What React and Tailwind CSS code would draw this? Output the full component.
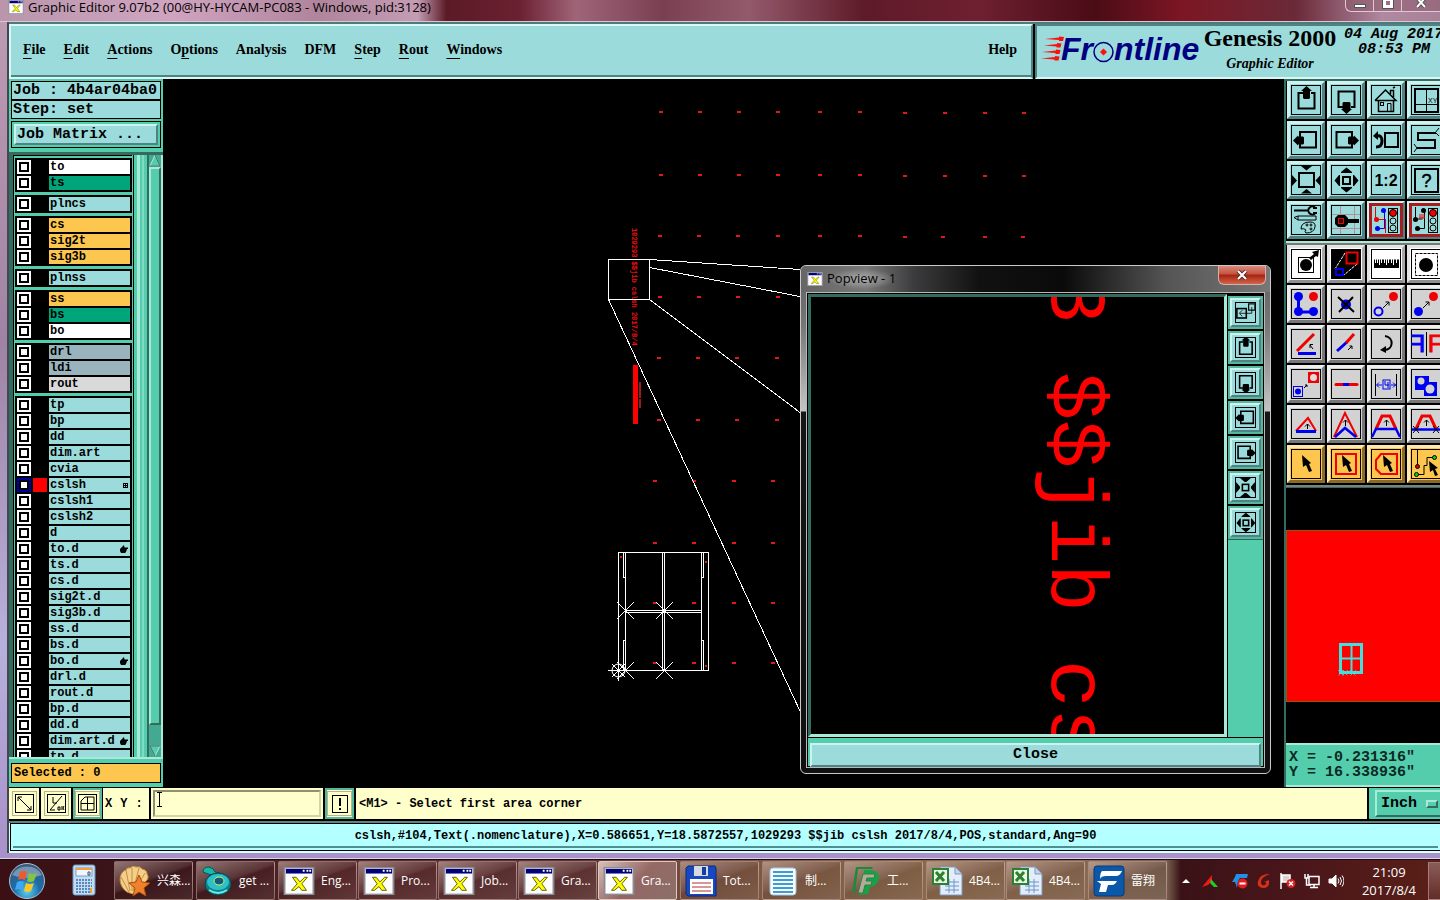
import React from "react";

const MONO = "font-['Liberation_Mono',monospace]";
const SERIF = "font-['Liberation_Serif',serif]";
const UI = "font-['Open_Sans','Noto_Sans_CJK_SC',sans-serif]";

const RAISED = "border-2 border-t-[#cdf3f1] border-l-[#cdf3f1] border-b-[#4f8383] border-r-[#4f8383]";

/* ---------- window glyphs ---------- */

function AppIcon({ className }) {
  return (
    <svg viewBox="0 0 32 30" className={className} aria-hidden="true">
      <rect x="0.5" y="0.5" width="31" height="29" fill="#fff" stroke="#8c8c94" strokeWidth="2" />
      <rect x="2" y="2" width="28" height="5" fill="#00007b" />
      <path d="M20 4h2M24 4h2M27 4h2" stroke="#fff" strokeWidth="2" />
      <path d="M9 11h4l4 5 5-5h3l-6 7 5 7h-5l-3-4-5 4H8l6-7z" fill="#ffff00" stroke="#5a5a00" strokeWidth="1" />
    </svg>
  );
}

/* ---------- tool glyphs, drawn in a 30 x 30 box ---------- */

const ink = { stroke: "#000", fill: "none", strokeWidth: 2 };
const RED = "#f00000";
const BLUE = "#0000f0";

const glyphs = {
  panUp: (
    <g>
      <path d="M12 8H7.5v15.500h16V8H20" {...ink} />
      <path d="M15.500 1l5.500 5h-2v7l-1 1h-5l-1-1V6h-2z" />
    </g>
  ),
  panDown: (
    <g>
      <path d="M12 22H7.500V6.500h16V22H20" {...ink} />
      <path d="M15.500 29l5.500-5h-1.500v-6l-1-1h-6l-1 1v6H10z" />
    </g>
  ),
  panLeft: (
    <g>
      <path d="M9 12V7h16v15.500H9V19" {...ink} />
      <path d="M2 15.500l5-5v1h5l1 1v6l-1 1H7v1z" />
    </g>
  ),
  panRight: (
    <g>
      <path d="M21 12V7H5.500v15.500H21V19" {...ink} />
      <path d="M28 15.500l-5-5v1h-5l-1 1v6l1 1h5v1z" />
    </g>
  ),
  home: (
    <g fill="none" stroke="#000" strokeWidth="1">
      <path d="M4 15.500L14.500 5 25 15.500H4M7.500 15.500v11h15v-11M19.500 9V5.500h3V12M22 3l2-1" strokeWidth="1.500" />
      <rect x="9.500" y="17.500" width="3" height="3" />
      <path d="M16.500 26V18.500h3.500V26" />
    </g>
  ),
  xyWindow: (
    <g>
      <rect x="4" y="4" width="23" height="23" {...ink} />
      <path d="M15.500 4v23M4 19.500h23" stroke="#000" fill="none" />
      <text x="17" y="18" fontSize="7" fontFamily="Liberation Sans">XY</text>
    </g>
  ),
  previous: (
    <g>
      <rect x="14" y="8" width="13" height="14" {...ink} />
      <path d="M6 11q5-1 5 5t-6 6" fill="none" stroke="#000" strokeWidth="3" />
      <path d="M2 11l5-5v9z" />
    </g>
  ),
  serpentine: (
    <g fill="none" stroke="#000">
      <path d="M25 8H7v7h17v8H6" strokeWidth="2" />
      <path d="M24 8l4-5M25 8l3 3M6 23l-3 4M6 23l-3-4" />
    </g>
  ),
  zoomIn: (
    <g>
      <rect x="8" y="8" width="15" height="14" {...ink} />
      <path d="M10 1h11l-5.500 4.500zM10 28.500h11L15.500 24zM1 10v11l5-5.500zM29.500 10v11l-5-5.500z" />
    </g>
  ),
  zoomInSmall: (
    <g>
      <rect x="11" y="11" width="8" height="8" {...ink} />
      <path d="M8 3h14l-6 5h-2zM8 27h14l-6-5h-2zM3 8v14l5-6v-2zM27 8v14l-5-6v-2z" />
    </g>
  ),
  zoomOut: (
    <g>
      <rect x="12" y="12" width="7" height="7" {...ink} />
      <path d="M10 7l5.500-4.500L21 7v1H10zM10 23l5.500 4.500L21 23v-1H10zM8 10l-4.500 5.500L8 21h1V10zM23 10l4.500 5.500L23 21h-1V10z" />
    </g>
  ),
  oneToTwo: (
    <text x="15" y="21" textAnchor="middle" fontSize="16" fontWeight="bold" fontFamily="Liberation Sans">1:2</text>
  ),
  help: (
    <g>
      <rect x="4" y="4" width="23" height="23" {...ink} />
      <text x="15.500" y="22" textAnchor="middle" fontSize="18" fontFamily="Liberation Sans" stroke="#000" strokeWidth="0.5">?</text>
    </g>
  ),
  tools: (
    <g fill="none" stroke="#000">
      <path d="M3 5.500h15M22 3h4M22 8h4" strokeWidth="2" />
      <path d="M24 2.500a4 4 0 1 0 0 6" strokeWidth="2" />
      <path d="M3 12.500l4-1.500h18v4H7zM7 11v4" />
      <path d="M10 24q0-7 9-7 6 0 5 5-1 6-9 6-2-1 0-3-2-2-5-1z" />
      <circle cx="16" cy="20" r="1" /><circle cx="20" cy="20" r="1" /><circle cx="20" cy="24" r="1" />
    </g>
  ),
  pad: (
    <g>
      <path d="M9.500 1v28M23.500 1v28M1 9.500h28M1 23.500h28" stroke="#b48e92" fill="none" />
      <path d="M16 14h12v4H16z" />
      <path d="M7 10h7l3 3v6l-3 3H7l-3-3v-6z" />
      <rect x="7.500" y="13.500" width="5" height="5" fill="none" stroke="#f00000" />
      <rect x="9.500" y="15.500" width="1" height="1" fill="#f00000" />
    </g>
  ),
  signalOn: (
    <g fill="none">
      <path d="M4.500 2v12M5.500 14.500h9M14.500 14v14" stroke={RED} />
      <path d="M13.500 5v18.500H8" stroke={BLUE} />
      <circle cx="5.500" cy="14.500" r="2.500" fill={RED} /><circle cx="12.500" cy="5.500" r="2.500" fill={BLUE} /><circle cx="6.500" cy="23.500" r="2.500" fill={BLUE} />
      <rect x="17.500" y="3.500" width="9" height="24" stroke="#000" />
      <circle cx="22" cy="8" r="3.500" fill={RED} stroke="#000" />
      <circle cx="22" cy="16" r="3" stroke="#000" /><circle cx="22" cy="23" r="3" stroke="#000" />
    </g>
  ),
  signalOff: (
    <g fill="none">
      <path d="M4.500 2v12h7M13.500 5v18.500H7" stroke="#000" />
      <path d="M9 9v4M11 9v4M13 9v4M8 13h6" stroke={RED} />
      <circle cx="4.500" cy="14.500" r="2.500" fill="#000" /><circle cx="12.500" cy="5.500" r="2.500" fill="#000" /><circle cx="6.500" cy="23.500" r="2.500" fill="#000" />
      <rect x="17.500" y="3.500" width="9" height="24" stroke="#000" />
      <circle cx="22" cy="8" r="3.500" fill={RED} stroke="#000" />
      <circle cx="22" cy="16" r="3" stroke="#000" /><circle cx="22" cy="23" r="3" stroke="#000" />
    </g>
  ),
  addFeature: (
    <g>
      <rect x="7.500" y="8.500" width="15" height="15" fill="none" stroke="#000" />
      <circle cx="15" cy="16" r="6" />
      <path d="M18 9l5-4-2-2 7-2-1 7-2-1-5 4z" />
    </g>
  ),
  copyOut: (
    <g fill="none">
      <rect x="1" y="1" width="28" height="28" fill="#000" />
      <path d="M14 4L4 20M26 15L13 26" stroke="#fff" strokeDasharray="3 1" />
      <rect x="15.500" y="3.500" width="11" height="11" stroke={RED} strokeWidth="2" />
      <rect x="5" y="20" width="7" height="6" stroke={BLUE} strokeWidth="2" />
    </g>
  ),
  ruler: (
    <g>
      <path d="M3 10.500h25V19H3z" />
      <path d="M4.500 10v4M6.500 10v4M8.500 10v6M10.500 10v4M13.500 10v4M15.500 10v6M17.500 10v4M20.500 10v4M22.500 10v6M25.500 10v4" stroke="#fff" />
    </g>
  ),
  areaSelect: (
    <g>
      <rect x="4.500" y="4.500" width="22" height="22" fill="none" stroke="#000" strokeDasharray="3 1" />
      <circle cx="15" cy="16" r="7" />
    </g>
  ),
  netPoints: (
    <g>
      <path d="M7.500 8v15h15" stroke={BLUE} strokeWidth="3" fill="none" />
      <circle cx="7.500" cy="7.500" r="4.500" fill={BLUE} /><circle cx="7.500" cy="22.500" r="4.500" fill={BLUE} /><circle cx="22.500" cy="22.500" r="4.500" fill={BLUE} />
      <circle cx="22.500" cy="7.500" r="4.500" fill={RED} />
    </g>
  ),
  deleteFeature: (
    <g>
      <circle cx="15" cy="15.500" r="5" fill={BLUE} />
      <path d="M7 8l16 15M22 8L8 23" stroke="#000" strokeWidth="2" />
    </g>
  ),
  moveRing: (
    <g>
      <circle cx="7.500" cy="22.500" r="4" fill="none" stroke={BLUE} strokeWidth="2" />
      <circle cx="22.500" cy="7.500" r="4.500" fill={RED} />
      <path d="M12 19l6-6M14.500 13H18v3.500" stroke="#000" fill="none" />
    </g>
  ),
  copyDot: (
    <g>
      <circle cx="7.500" cy="22.500" r="4.500" fill={BLUE} />
      <circle cx="22.500" cy="7.500" r="4.500" fill={RED} />
      <path d="M12 19l6-6M14.500 13H18v3.500" stroke="#000" fill="none" />
    </g>
  ),
  rotateLine: (
    <g fill="none">
      <path d="M6 22L23 5" stroke={RED} strokeWidth="3" />
      <path d="M7 24.500h18" stroke={BLUE} strokeWidth="3" />
      <path d="M22 20l-3-4M19 19v-3.500h3" stroke="#000" />
    </g>
  ),
  stretchLine: (
    <g fill="none">
      <path d="M6 22l10-9" stroke={BLUE} strokeWidth="3" />
      <path d="M15 14l8-9" stroke={RED} strokeWidth="3" />
      <path d="M17 21l4-4M18.500 17H21v3" stroke="#000" />
    </g>
  ),
  rotate: (
    <g>
      <path d="M14 7c9 1 9 14-1 14" fill="none" stroke="#000" strokeWidth="2" />
      <path d="M9 21l6-4v7z" />
    </g>
  ),
  mirror: (
    <g fontFamily="Liberation Sans" fontSize="23" strokeWidth="1">
      <text x="-14" y="23" transform="scale(-1,1)" fill={BLUE} stroke={BLUE}>F</text>
      <text x="17" y="23" fill={RED} stroke={RED}>F</text>
      <path d="M15.500 3v24" stroke="#000" />
    </g>
  ),
  swapShape: (
    <g fill="none">
      <rect x="2.500" y="17.500" width="9" height="10" stroke={BLUE} /><circle cx="7" cy="22.500" r="3" fill={BLUE} />
      <rect x="17" y="3" width="11" height="11" fill={RED} /><circle cx="22.500" cy="8.500" r="3.500" fill="#ddd" />
      <path d="M13 19l3-3M14 16h2v2" stroke="#000" />
    </g>
  ),
  mergeLine: (
    <g>
      <path d="M5 15.500h21" stroke={RED} strokeWidth="3" strokeLinecap="round" />
      <path d="M12 15.500h6" stroke={BLUE} strokeWidth="3" />
    </g>
  ),
  spacing: (
    <g fill="none">
      <path d="M4.500 5v22M25.500 5v22" stroke="#000" />
      <rect x="12" y="11" width="7" height="9" stroke={BLUE} />
      <path d="M14 12v4h4M17 13v6M6 16h5M20 16h5M8 13.500L5.500 16 8 18.500M22 13.500l2.500 2.500-2.500 2.500" stroke={BLUE} />
    </g>
  ),
  surfaces: (
    <g>
      <path d="M4 7h14v6h8v14H13v-6H4z" fill={BLUE} />
      <circle cx="10" cy="12" r="3.500" fill="#d2d2d2" /><circle cx="19" cy="20" r="4.500" fill="#d2d2d2" />
    </g>
  ),
  tri1: (
    <g fill="none">
      <path d="M5 22L17 9l8 13" stroke={RED} strokeWidth="2" />
      <path d="M5 22.500h20" stroke={BLUE} strokeWidth="3" />
      <path d="M16.500 20v-5M14 17.500l2.500-2.500 2.500 2.500" stroke="#000" />
    </g>
  ),
  tri2: (
    <g fill="none">
      <path d="M3 28L14 4l12 24" stroke={RED} strokeWidth="2" />
      <path d="M4 28l10-9 11 9" stroke={BLUE} strokeWidth="2.500" />
      <path d="M14.500 17v-6M12 13.500l2.500-2.500 2.500 2.500" stroke="#000" />
    </g>
  ),
  trap1: (
    <g fill="none">
      <path d="M5 20l6-13h8l6 13" stroke={RED} strokeWidth="3" />
      <path d="M1 28l4-8h20l4 8" stroke={BLUE} strokeWidth="2.500" />
      <path d="M15.500 17v-6M13 13.500l2.500-2.500 2.500 2.500" stroke="#000" />
    </g>
  ),
  trap2: (
    <g fill="none">
      <path d="M5 20l6-13h8l6 13" stroke={RED} strokeWidth="3" />
      <path d="M1 20.500h28" stroke={BLUE} strokeWidth="2.500" />
      <path d="M15.500 17v-6M13 13.500l2.500-2.500 2.500 2.500M2 17l6 7M8 17l-6 7M22 17l6 7M28 17l-6 7" stroke="#000" />
    </g>
  ),
  cursor: <path d="M11 6l1 12 3-2 3 7 3-1-3-7 2-1z" />,
  cursorBox: (
    <g>
      <rect x="5" y="5" width="20" height="20" fill="none" stroke={RED} strokeWidth="2" />
      <path d="M11 6l1 12 3-2 3 7 3-1-3-7 2-1z" />
    </g>
  ),
  cursorPoly: (
    <g>
      <path d="M10 5h16v20H10l-5-5v-9z" fill="none" stroke={RED} strokeWidth="2" />
      <path d="M12 6l1 12 3-2 3 7 3-1-3-7 2-1z" />
    </g>
  ),
  cursorNet: (
    <g>
      <path d="M6.500 1v16M6 25.500h7v-9h3V8.500h7" fill="none" stroke="#000" />
      <circle cx="6.500" cy="17.500" r="2" fill="#d00" stroke="#000" /><circle cx="5.500" cy="25.500" r="2" fill="#0d0" stroke="#000" /><circle cx="23.500" cy="8.500" r="2" fill="#0d0" stroke="#000" />
      <path d="M18 12l1 11 3-2 2 6 3-1-3-6 3-1z" />
    </g>
  ),
  popLink: (
    <g fill="none" stroke="#000">
      <rect x="4" y="10" width="12" height="12" strokeWidth="2" />
      <rect x="19" y="4" width="8" height="8" strokeWidth="1.500" />
      <path d="M8 16h15v-8M11 12l-4 4 4 4" />
    </g>
  ),
};

const zoomTools = [
  ["panUp", "Pan up"], ["panDown", "Pan down"], ["home", "Home"], ["xyWindow", "XY window"],
  ["panLeft", "Pan left"], ["panRight", "Pan right"], ["previous", "Previous view"], ["serpentine", "Serpentine"],
  ["zoomIn", "Zoom in"], ["zoomOut", "Zoom out"], ["oneToTwo", "Scale one to two"], ["help", "Query"],
  ["tools", "Setup"], ["pad", "Pad"], ["signalOn", "Layer signals", "alert"], ["signalOff", "Net signals", "alert"],
];

const editTools = [
  ["addFeature", "Add feature", "white"], ["copyOut", "Popview", "white"], ["ruler", "Measure", "white"], ["areaSelect", "Area select", "white"],
  ["netPoints", "Net points", "gray"], ["deleteFeature", "Delete", "gray"], ["moveRing", "Move", "gray"], ["copyDot", "Copy", "gray"],
  ["rotateLine", "Rotate line", "gray"], ["stretchLine", "Stretch line", "gray"], ["rotate", "Rotate", "gray"], ["mirror", "Mirror", "gray"],
  ["swapShape", "Swap shape", "gray"], ["mergeLine", "Merge line", "gray"], ["spacing", "Spacing", "gray"], ["surfaces", "Surfaces", "gray"],
  ["tri1", "Stretch corner", "gray"], ["tri2", "Stretch parallel corner", "gray"], ["trap1", "Move segment", "gray"], ["trap2", "Trim segment", "gray"],
  ["cursor", "Select", "gold"], ["cursorBox", "Select in box", "gold"], ["cursorPoly", "Select in polygon", "gold"], ["cursorNet", "Select net", "gold"],
];

const toneClasses = {
  cyan: "bg-[#9bdbdb] border-t-[#cdf3f1] border-l-[#cdf3f1] border-b-[#4f8383] border-r-[#4f8383]",
  alert: "bg-[#9bdbdb] border-t-[#cdf3f1] border-l-[#cdf3f1] border-b-[#4f8383] border-r-[#4f8383]",
  white: "bg-white border-t-[#e4e4e4] border-l-[#e4e4e4] border-b-[#8f8f8f] border-r-[#a8a8a8]",
  gray: "bg-[#d2d2d2] border-t-[#efefef] border-l-[#efefef] border-b-[#777777] border-r-[#777777]",
  gold: "bg-[#fdc64e] border-t-[#ffe9b0] border-l-[#ffe9b0] border-b-[#8a6b24] border-r-[#8a6b24]",
};

function ToolButton({ icon, label, tone = "cyan" }) {
  const alert = tone === "alert";
  return (
    <button aria-label={label} className={`flex size-[38px] items-center justify-center border-3 ${toneClasses[tone]}`}>
      <svg viewBox="0 0 30 30" className="size-[30px] shrink-0 overflow-visible">
        {alert ? (
          <rect x="-0.5" y="-0.5" width="31" height="31" fill="none" stroke="#a81c20" strokeWidth="3" />
        ) : (
          <rect x="0.5" y="0.5" width="29" height="29" fill="none" stroke="#000" />
        )}
        {glyphs[icon]}
      </svg>
    </button>
  );
}

/* ---------- layer list ---------- */

const fills = {
  white: "bg-white",
  green: "bg-[#00a57c]",
  cyan: "bg-[#9bdbdb]",
  gold: "bg-[#fdc64e]",
  slate: "bg-[#9ab4bd]",
  light: "bg-[#d9d9d9]",
};

const layerGroups = [
  [["to", "white"], ["ts", "green"]],
  [["plncs", "cyan"]],
  [["cs", "gold"], ["sig2t", "gold"], ["sig3b", "gold"]],
  [["plnss", "cyan"]],
  [["ss", "gold"], ["bs", "green"], ["bo", "white"]],
  [["drl", "slate"], ["ldi", "slate"], ["rout", "light"]],
  [
    ["tp"], ["bp"], ["dd"], ["dim.art"], ["cvia"], ["cslsh", "cyan", "grid"], ["cslsh1"], ["cslsh2"], ["d"],
    ["to.d", "cyan", "hand"], ["ts.d"], ["cs.d"], ["sig2t.d"], ["sig3b.d"], ["ss.d"], ["bs.d"],
    ["bo.d", "cyan", "hand"], ["drl.d"], ["rout.d"], ["bp.d"], ["dd.d"], ["dim.art.d", "cyan", "hand"], ["tp.d"],
  ],
];

function LayerMark({ kind }) {
  if (kind === "grid")
    return (
      <svg viewBox="0 0 5 5" className="size-[5px]" shapeRendering="crispEdges">
        <path d="M0 0h5v5H0z" /><path d="M1 1h1v1H1zM3 1h1v1H3zM1 3h1v1H1zM3 3h1v1H3z" fill="#9bdbdb" />
      </svg>
    );
  if (kind === "hand")
    return (
      <svg viewBox="0 0 8 8" className="size-2"><path d="M0 4l4-4 .5 2.500H8v1.500H7L6 7 5 8H1L0 6z" /></svg>
    );
  return null;
}

function LayerRow({ name, tone = "cyan", mark }) {
  const current = name === "cslsh";
  return (
    <label className="mb-0.5 flex h-3.5 shrink-0 gap-0.5">
      <input
        type="checkbox"
        defaultChecked={current}
        className="size-3.5 appearance-none border-2 border-white bg-white shadow-[inset_0_0_0_2px_#000] checked:border-[#0000a0]"
      />
      <span className={`size-3.5 ${current ? "bg-[#ff0000]" : "bg-black"}`} />
      <span className={`flex min-w-0 flex-1 items-center justify-between pr-0.5 pl-px text-xs leading-[14px] font-bold ${fills[tone]}`}>
        {name}
        <LayerMark kind={mark} />
      </span>
    </label>
  );
}

function Sidebar() {
  return (
    <aside className={`${MONO} flex w-[154px] shrink-0 flex-col bg-[#54cdad] text-black`}>
      <div className="flex flex-col pt-0.5 pr-0.5 pl-0.5 text-[15px] leading-[17px] font-bold whitespace-pre">
        <div className="h-[19px] border border-black bg-[#9bdbdb] pl-px">Job : 4b4ar04ba0</div>
        <div className="h-[19px] border border-black bg-[#9bdbdb] pl-px">Step: set</div>
        <div className="mt-0.5 h-[27px] border border-black p-0.5">
          <button className={`flex h-full w-full items-center bg-[#9bdbdb] pl-px font-bold ${RAISED}`}>Job Matrix ...</button>
        </div>
      </div>
      <div className="mt-1 flex min-h-0 flex-1 border-t-3 border-b-2 border-t-[#336b5e] border-b-[#a8ead8]">
        <div className="w-1 shrink-0 bg-[#336b5e]" />
        <div className="flex min-w-0 flex-1 flex-col gap-[3px] overflow-hidden border-t border-l border-black pt-0.5 pl-px">
          {layerGroups.map((rows) => (
            <div key={rows[0][0]} className="flex shrink-0 flex-col bg-black pt-0.5 pr-0.5 pl-0.5">
              {rows.map(([name, tone, mark]) => (
                <LayerRow key={name} name={name} tone={tone} mark={mark} />
              ))}
            </div>
          ))}
        </div>
        <div className="ml-px w-px bg-black" />
        <div className="ml-[3px] w-[3px] bg-[#a8ead8]" />
        <div className="ml-0.5 w-0.5 bg-[#7fdcc4]" />
        <div className="ml-[3px] flex w-[14px] flex-col items-center border-l-2 border-[#336b5e] bg-[#45a890]">
          <svg viewBox="0 0 12 12" className="size-3"><path d="M6 0l5 11H1z" fill="#54cdad" stroke="#a8ead8" /><path d="M6 0l5 11H1" fill="none" stroke="#336b5e" /></svg>
          <div className="w-full flex-1 border-2 border-t-[#a8ead8] border-r-[#336b5e] border-b-[#336b5e] border-l-[#a8ead8] bg-[#54cdad]" />
          <div className="h-5" />
          <svg viewBox="0 0 12 12" className="size-3"><path d="M6 11L11 1H1z" fill="#54cdad" stroke="#a8ead8" /><path d="M6 11L1 1h10" fill="none" stroke="#336b5e" /></svg>
        </div>
        <div className="w-0.5 bg-[#a8ead8]" />
      </div>
      <div className="mx-0.5 mt-1 mb-1 h-5 shrink-0 border border-black bg-[#fdc64e] pl-0.5 text-xs leading-[18px] font-bold">Selected : 0</div>
    </aside>
  );
}

/* ---------- drawing ---------- */

const dotRows = [
  [112, [661, 700, 739, 778, 820, 860, 905, 945, 985, 1024]],
  [175, [661, 700, 739, 778, 820, 860, 905, 945, 985, 1024]],
  [236, [660, 699, 738, 778, 820, 860, 905, 943, 985, 1023]],
  [297, [660, 699, 738, 778]],
  [358, [659, 698, 737, 777]],
  [420, [659, 698, 737, 777]],
  [481, [655, 694, 734, 773]],
  [543, [655, 694, 734, 773]],
  [603, [655, 694, 734, 773]],
  [663, [655, 694, 734, 773]],
];

const crosses = [[625, 610], [664, 610], [625, 670], [664, 670]];

function Drawing() {
  return (
    <svg className="absolute inset-0 h-full w-full">
      <g transform="translate(-163,-79)">
        <g fill="#e01818">
          {dotRows.map(([y, xs]) => xs.map((x, i) => <rect key={`${x}-${y}`} x={x - 2} y={y - 1 + (y < 250 && i > 5 ? 1 : 0)} width="4" height="2" />))}
          <rect x="620" y="556" width="2" height="2" /><rect x="705" y="561" width="2" height="2" /><rect x="705" y="665" width="2" height="2" />
        </g>
        <text transform="translate(632,228) rotate(90)" fontFamily="Liberation Mono" fontSize="7" fill="#ff1010" stroke="#ff1010" strokeWidth="0.2">1029293 $$jib cslsh 2017/8/4</text>
        <rect x="633" y="365" width="5" height="52" fill="#ff0000" /><rect x="633" y="417" width="5" height="7" fill="#ff0000" />
        <path d="M640 382v16M640 399v9" stroke="#a01818" strokeWidth="2" />
        <g fill="none" stroke="#fff" strokeWidth="1" shapeRendering="crispEdges">
          <rect x="608.500" y="259.500" width="41" height="40" />
          <path d="M649.500 259.500L800 269.500M649.500 267.500L800 296.500M649.500 299.500L800 412.500M608.500 299.500L800 711" />
          <path d="M618.500 552.500h90v118h-90zM625.500 552v118M623.500 552v25h2M623.500 670v-30h2M662.500 552v118M664.500 552v118M701.500 552v118M703.500 552v25h-2M703.500 670v-30h-2M625 610.500h77M625 612.500h77" />
        </g>
        <g fill="none" stroke="#fff">
          {crosses.map(([x, y]) => <path key={`${x}-${y}`} d={`M${x - 8} ${y - 8}l17 17M${x - 8} ${y + 9}l17-17`} />)}
          <circle cx="618.500" cy="670.500" r="6.500" />
          <path d="M608 670.500h21M618.500 660v21M612 664l13 13M625 664l-13 13" />
        </g>
      </g>
    </svg>
  );
}

/* ---------- popup ---------- */

const popTools = [
  ["popLink", "Link view"], ["panUp", "Popview pan up"], ["panDown", "Popview pan down"], ["panLeft", "Popview pan left"],
  ["panRight", "Popview pan right"], ["zoomInSmall", "Popview zoom in"], ["zoomOut", "Popview zoom out"],
];

function Popview() {
  return (
    <section
      aria-label="Popview - 1"
      className="absolute top-[186px] left-[637px] flex h-[509px] w-[471px] flex-col rounded-md border border-[#c9c9c9] bg-[linear-gradient(180deg,#5e5e5e_0px,#777777_60px,#c4c4c4_145px,#161618_146px,#101012_100%)] px-[5px] pb-[5px]"
    >
      <header className="-mx-[5px] flex h-[26px] shrink-0 items-start justify-between rounded-t-md bg-[linear-gradient(90deg,#666_0%,#777_14%,#3c3c3e_24%,#111_38%,#0a0a0a_56%,#555_78%,#777_100%)] pl-1.5">
        <div className={`${UI} flex h-full items-center gap-1 text-[13px] text-black`}>
          <AppIcon className="h-3.5 w-4" />
          <h2 className="rounded-full bg-[radial-gradient(closest-side,#b5b5b5dd,#99999900)]">Popview - 1</h2>
        </div>
        <button aria-label="Close window" className="mr-1 flex h-[19px] w-12 items-center justify-center rounded-b-md border border-t-0 border-[#d8b0a8] bg-[linear-gradient(#d98a7c_0%,#c4523f_45%,#a8220f_50%,#d0664c_100%)]">
          <svg viewBox="0 0 12 10" className="h-2.5 w-3"><path d="M2 1l8 8M10 1L2 9" stroke="#50302c" strokeWidth="4" /><path d="M2 1l8 8M10 1L2 9" stroke="#fff" strokeWidth="2" /></svg>
        </button>
      </header>
      <div className="flex min-h-0 flex-1 flex-col border border-[#b8b8b8] bg-black p-px">
        <div className="flex min-h-0 flex-1">
          <div className="relative min-w-0 flex-1 overflow-hidden border-3 border-t-[#336b5e] border-r-[#a8ead8] border-b-[#a8ead8] border-l-[#336b5e]">
            <svg className="absolute inset-0 h-full w-full">
              <text transform="translate(241,-21) rotate(90)" fontFamily="Liberation Mono" fontSize="80" fill="#ff0000" xmlSpace="preserve">3 $$jib cs</text>
            </svg>
          </div>
          <div className="ml-px flex w-[35px] flex-col gap-0.5 bg-[linear-gradient(#000_0px,#000_245px,#54cdad_246px)] pt-0.5">
            {popTools.map(([icon, label]) => (
              <div key={label} className="flex h-[33px] w-full shrink-0 bg-[#54b89f] p-0.5">
                <button aria-label={label} className={`flex h-full w-full items-center justify-center bg-[#9bdbdb] ${RAISED}`}>
                  <svg viewBox="0 0 30 30" className="size-[21px] shrink-0">
                    <rect x="0.7" y="0.7" width="28.6" height="28.6" fill="none" stroke="#000" strokeWidth="1.4" />
                    <g transform="translate(-1.800,-1.800) scale(1.12)">{glyphs[icon]}</g>
                  </svg>
                </button>
              </div>
            ))}
          </div>
        </div>
        <div className="mt-px h-[28px] shrink-0 bg-[#54cdad] p-0.5">
          <button className={`${MONO} h-full w-full bg-[#9bdbdb] text-[15px] leading-4 font-bold ${RAISED}`}>Close</button>
        </div>
      </div>
    </section>
  );
}

/* ---------- header ---------- */

const menus = [["F", "ile"], ["E", "dit"], ["A", "ctions"], ["", "Options"], ["", "Analysis"], ["", "DFM"], ["S", "tep"], ["R", "out"], ["W", "indows"]];

function Header() {
  return (
    <header className={`${SERIF} flex h-[57px] shrink-0 gap-0.5 border-t-2 border-t-[#4f7a7a] text-black`}>
      <nav className="flex min-w-0 flex-1 items-center justify-between border-2 border-t-[#d9f7f5] border-r-[#4f8383] border-b-[#d9f7f5] border-l-[#d9f7f5] bg-[#9bdbdb] pr-3.5 pb-1 pl-3 text-sm font-bold shadow-[inset_0_-2px_0_#4f8383]">
        <div className="flex gap-[18px]">
          {menus.map(([key, rest]) => (
            <button key={rest} className="flex">
              {rest === "Options" ? <span>O<span className="underline underline-offset-4">p</span>tions</span> : <span><span className="underline underline-offset-4">{key}</span>{rest}</span>}
            </button>
          ))}
        </div>
        <button>Help</button>
      </nav>
      <div className="flex w-[405px] shrink-0 border-2 border-r-0 border-t-[#4f8383] border-b-[#d9f7f5] border-l-[#4f8383] bg-[#9bdbdb]">
        <svg viewBox="0 0 160 48" className="ml-1 h-12 w-40 shrink-0" aria-label="Frontline">
          <g fill="#ff1010">
            <path d="M4 13l14-1.500V10.500l5 .5-1 4h-4v-1zM3 19.500l13-1.500v-1l4.500.5-1 4h-4v-1zM1 26l14-1.500v-1l4.500.5-1 4h-4v-1zM0 32.500l14-1.500v-1l4.500.5-1 4h-4v-1z" />
          </g>
          <g fontFamily="Liberation Sans" fontSize="32" fontWeight="bold" fontStyle="italic" fill="#000080">
            <text x="20" y="34">Fr</text><text x="73" y="34">ntline</text>
          </g>
          <circle cx="62.500" cy="26" r="9.500" fill="none" stroke="#000080" strokeWidth="1.500" />
          <path d="M62.500 22.500l3.500 3.500-3.500 3.500L59 26z" fill="#ff1010" />
        </svg>
        <div className="ml-px flex w-[136px] shrink-0 flex-col items-center gap-0.5">
          <h1 className="text-2xl leading-6 font-bold whitespace-nowrap">Genesis 2000</h1>
          <p className="text-sm leading-6 font-bold whitespace-nowrap italic">Graphic Editor</p>
        </div>
        <div className={`${MONO} ml-1.5 flex shrink-0 flex-col pt-px text-[15px] leading-[15px] font-bold whitespace-pre italic`}>
          <span>04 Aug 2017</span>
          <span className="pl-3.5">08:53 PM</span>
        </div>
      </div>
    </header>
  );
}

/* ---------- right panel ---------- */

function RightPanel() {
  return (
    <aside className="flex w-[156px] shrink-0 flex-col overflow-hidden border-t-2 border-l-2 border-[#336b5e] bg-black">
      <div className="grid shrink-0 grid-cols-[repeat(4,38px)] gap-0.5 pb-0.5 pl-px">
        {zoomTools.map(([icon, label, tone]) => <ToolButton key={label} icon={icon} label={label} tone={tone} />)}
      </div>
      <div className="h-1 shrink-0 border-t-2 border-b-2 border-t-[#a8ead8] border-b-[#777777]" />
      <div className="grid shrink-0 grid-cols-[repeat(4,38px)] gap-0.5 pb-0.5 pl-px">
        {editTools.map(([icon, label, tone]) => <ToolButton key={label} icon={icon} label={label} tone={tone} />)}
      </div>
      <div className="h-[3px] shrink-0 border-t-2 border-b border-t-[#808080] border-b-[#336b5e]" />
      <div className="flex min-h-0 flex-1 items-center">
        <svg viewBox="0 0 154 172" className="h-[172px] w-full" preserveAspectRatio="xMinYMid slice">
          <rect x="0.500" y="0.500" width="160" height="171" fill="#ff0000" stroke="#8a5a10" />
          <g fill="none" stroke="#40e0e0">
            <rect x="54.500" y="114.500" width="21" height="28" strokeWidth="3" />
            <path d="M65.500 113v30M54 128.500h22" strokeWidth="2" />
            <path d="M52 140l6 6M58 140l-6 6M56 140l6 6M62 140l-6 6M64 140l6 6M70 140l-6 6" strokeDasharray="1 1" />
          </g>
        </svg>
      </div>
      <div className={`${MONO} h-[44px] shrink-0 border-t-2 border-b-2 border-[#a8ead8] bg-[#54cdad] pt-[5px] pl-[3px] text-[15px] leading-[15px] font-bold whitespace-pre text-[#0c2a22]`}>
        <div>X = -0.231316"</div>
        <div>Y = 16.338936"</div>
      </div>
    </aside>
  );
}

/* ---------- command and status bars ---------- */

function CommandLine() {
  const btn = "flex h-full shrink-0 items-center justify-center border-2";
  return (
    <div className={`${MONO} flex h-[34px] shrink-0 gap-0.5 border-t border-b-2 border-black bg-black text-xs font-bold text-black`}>
      <button aria-label="Snap distance" className={`${btn} w-[30px] border-[#ffffcc] bg-[#ffffcc]`}>
        <svg viewBox="0 0 25 25" className="size-[25px]" fill="none" stroke="#000"><rect x="0.500" y="0.500" width="24" height="24" stroke="#b5b58c" /><rect x="3.500" y="3.500" width="18" height="18" /><path d="M6 6l13 13M6 10V6h4M19 15v4h-4" /></svg>
      </button>
      <button aria-label="Snap angle" className={`${btn} w-[30px] border-[#ffffcc] bg-[#ffffcc]`}>
        <svg viewBox="0 0 25 25" className="size-[25px]" fill="none" stroke="#000"><rect x="0.500" y="0.500" width="24" height="24" stroke="#b5b58c" /><rect x="3.500" y="3.500" width="18" height="18" /><path d="M6 19L18 5M6 19h5M9 6v6h4M14 16v3h2v-3zM18 15v4M20 15l-1 2 1 2" /></svg>
      </button>
      <button aria-label="Snap grid" className={`${btn} w-[29px] border-[#54b89f] bg-[#ffffcc]`}>
        <svg viewBox="0 0 25 25" className="size-[25px]" fill="none" stroke="#000"><rect x="0.500" y="0.500" width="24" height="24" stroke="#b5b58c" /><rect x="3.500" y="3.500" width="18" height="18" /><path d="M10 6h9v13H6v-9zM12.500 6v13M6 12.500h13" /></svg>
      </button>
      <label htmlFor="xy" className="-ml-px flex w-[46px] shrink-0 items-center bg-[#ffffcc] pl-0.5 whitespace-pre">
        <span className="flex gap-2"><span>X</span><span>Y</span><span>:</span></span>
      </label>
      <div className="relative w-[172px] shrink-0 bg-[#ffffcc] p-0.5">
        <input id="xy" type="text" className="h-full w-full border-2 border-t-[#8f8f72] border-r-[#d3d3a8] border-b-[#d3d3a8] border-l-[#8f8f72] bg-[#ffffcc] px-1 outline-none" />
        <svg viewBox="0 0 5 15" className="pointer-events-none absolute top-1 left-1.5 h-[15px] w-[5px]"><path d="M0 .5h5M0 14.500h5M2.500 0v15" stroke="#000" /></svg>
      </div>
      <button aria-label="Confirm" className={`${btn} w-[29px] border-[#54b89f] bg-[#ffffcc]`}>
        <svg viewBox="0 0 25 25" className="size-[25px]" fill="none" stroke="#000"><rect x="0.500" y="0.500" width="24" height="24" stroke="#b5b58c" /><rect x="5.500" y="4.500" width="15" height="17" /><path d="M13 7v8M13 17v2" strokeWidth="2" /></svg>
      </button>
      <p className="flex min-w-0 flex-1 items-center bg-[#ffffcc] pl-[3px]">&lt;M1&gt; - Select first area corner</p>
      <div className="flex w-[71px] shrink-0 items-stretch bg-[#54cdad] py-0.5 pl-1.5">
        <button className="flex w-full items-center justify-between border-2 border-r-0 border-t-[#a8ead8] border-b-[#336b5e] border-l-[#a8ead8] pr-0.5 pl-1 text-[15px] font-bold">
          Inch
          <span className="h-2 w-3 border-2 border-t-[#a8ead8] border-r-[#336b5e] border-b-[#336b5e] border-l-[#a8ead8]" />
        </button>
      </div>
    </div>
  );
}

function StatusBar() {
  return (
    <div className="shrink-0 border-t-2 border-[#5a8585] bg-[#d9ffff] pb-0.5 pl-px">
      <div className="border border-r-0 border-black bg-[#b4ffff] p-0.5">
        <p className={`${MONO} flex h-[22px] items-center justify-center border-b-2 border-[#4f8f8f] text-xs font-bold whitespace-nowrap text-black`}>
          cslsh,#104,Text(.nomenclature),X=0.586651,Y=18.5872557,1029293 $$jib cslsh 2017/8/4,POS,standard,Ang=90
        </p>
      </div>
    </div>
  );
}

/* ---------- taskbar ---------- */

const taskIcons = {
  shell: (
    <svg viewBox="0 0 32 32" className="size-8">
      <path d="M8 27C-2 20 0 7 7 5q1-3 4-2 3-3 6-1 4-1 6 2 5 1 5 5 3 4-2 8-4 8-12 12z" fill="#f3cf8c" stroke="#c98d3a" />
      <path d="M10 27L2 12M11 26L7 5M13 26V3M14 26l6-23M16 25l10-17" stroke="#c98d3a" fill="none" />
      <path d="M20 10l3 7 8 1-6 5 2 8-7-4-6 4 2-8-6-5 7-1z" fill="#f0812a" stroke="#a84a10" />
    </svg>
  ),
  disc: (
    <svg viewBox="0 0 32 32" className="size-8">
      <path d="M2 7q0-5 6-5 5 1 6 5l5 1-3 3-9-2z" fill="#18b8a8" stroke="#055" />
      <ellipse cx="17" cy="19" rx="13" ry="11" fill="#0d8088" stroke="#044850" />
      <ellipse cx="17" cy="17" rx="11" ry="8" fill="#2cc0c8" /><ellipse cx="18" cy="16" rx="5" ry="4" fill="#105c80" stroke="#d8f060" />
      <path d="M8 25q9 6 18 0" stroke="#6fe8e0" strokeWidth="2" fill="none" />
    </svg>
  ),
  genesis: <AppIcon className="h-7 w-8" />,
  floppy: (
    <svg viewBox="0 0 32 32" className="size-8">
      <path d="M1 3l2-2h27l1 2v28H3l-2-2z" fill="#1848c0" stroke="#0a2878" />
      <rect x="9" y="1" width="14" height="10" fill="#d8d8e0" /><rect x="17" y="2" width="4" height="8" fill="#1040a0" />
      <rect x="5" y="14" width="23" height="15" fill="#fff" /><path d="M7 18h19M7 22h19M7 26h19" stroke="#b03030" />
    </svg>
  ),
  note: (
    <svg viewBox="0 0 32 32" className="size-8">
      <rect x="3" y="3" width="26" height="27" rx="3" fill="#f4fbff" stroke="#a8c8dc" />
      <path d="M6 7h20M6 11h20M6 15h20M6 19h20M6 23h20M6 27h20" stroke="#3c9cd4" strokeWidth="2" />
    </svg>
  ),
  foxit: (
    <svg viewBox="0 0 32 32" className="size-8">
      <path d="M7 2h17l-1 2H9L6 27l-3 1z" fill="#1a8a3c" />
      <path d="M15 5h7q8 1 8 8-1 8-9 9l-2 7-9 1 3-8z" fill="#1aa048" />
      <path d="M14 9h12l-1 4h-7l-1 3h6l-1 4h-6l-2 8h-5z" fill="#b8a89c" stroke="#1a8a3c" />
    </svg>
  ),
  excel: (
    <svg viewBox="0 0 32 32" className="size-8">
      <path d="M9 2h15l7 7v21H9z" fill="#e4eefa" stroke="#8098c0" /><path d="M24 2v7h7" fill="#c0d4f0" stroke="#8098c0" />
      <path d="M14 17h14M14 21h14M14 25h14M18 14v14M23 14v14" stroke="#6c94cc" />
      <rect x="2" y="4" width="15" height="15" fill="#e8f4e4" stroke="#2c8030" strokeWidth="2" /><path d="M5 7l8 9M13 7l-8 9" stroke="#2c8030" strokeWidth="3" />
    </svg>
  ),
  feixiang: (
    <svg viewBox="0 0 32 32" className="size-8">
      <rect x="1" y="1" width="30" height="30" rx="3" fill="#0c58a8" stroke="#083a78" />
      <path d="M9 6h20q-2 5-6 5H13q-5 0-6 3 0-6 2-8z" fill="#fff" /><path d="M4 16h20q-2 4-5 4h-4l-2 7H6l2-8z" fill="#fff" />
    </svg>
  ),
};

const taskGroups = [
  [["shell", "兴森..."]],
  [["disc", "get ..."]],
  [["genesis", "Eng..."], ["genesis", "Pro..."], ["genesis", "Job..."], ["genesis", "Gra..."], ["genesis", "Gra...", true]],
  [["floppy", "Tot..."]],
  [["note", "制..."]],
  [["foxit", "工..."]],
  [["excel", "4B4..."], ["excel", "4B4..."]],
  [["feixiang", "雷翔"]],
];

function Taskbar() {
  return (
    <footer className={`${UI} flex h-10 shrink-0 items-stretch bg-[linear-gradient(90deg,#3a1014_0%,#3a161a_12%,#5a2a2c_25%,#5f3434_40%,#7a5440_50%,#8a6a4a_65%,#8a6a50_75%,#7a6250_81%,#3a1216_82%,#4a161a_90%,#5a2018_100%)] text-white`}>
      <button aria-label="Start" className="ml-2 w-[38px]">
        <svg viewBox="0 0 38 38" className="size-[38px]">
          <defs>
            <radialGradient id="orb" cx="50%" cy="80%" r="75%"><stop offset="0" stopColor="#5cd0f0" /><stop offset="0.5" stopColor="#1c6ca8" /><stop offset="1" stopColor="#3a5a7c" /></radialGradient>
          </defs>
          <circle cx="19" cy="20" r="17.500" fill="url(#orb)" stroke="#a8c4d8" />
          <path d="M4 14a16 13 0 0 1 30 0q-15 6-30 0z" fill="#ffffff55" />
          <path d="M12 11q4-2 7 0l-2 8q-4-2-7 0z" fill="#f05a28" /><path d="M21 12q4 2 8 0l-3 8q-3 2-7 0z" fill="#84c440" />
          <path d="M9 21q4-2 7 0l-2 8q-3-2-7 0z" fill="#40a8f0" /><path d="M18 22q4 2 8 0l-3 8q-3 2-7 0z" fill="#fcc828" />
        </svg>
      </button>
      <button aria-label="Calculator" className="mr-3.5 ml-[26px] w-7">
        <svg viewBox="0 0 24 32" className="h-8 w-6">
          <rect x="1" y="1" width="22" height="30" rx="2" fill="#c4dcf0" stroke="#6898c4" />
          <rect x="4" y="4" width="16" height="8" fill="#eef6ff" stroke="#7c9cbc" /><rect x="4" y="4" width="16" height="2" fill="#f0a040" />
          <path d="M16 8h2v3h-2z" fill="none" stroke="#456" />
          <path d="M4 16h16M4 19h16M4 22h16M4 25h16M4 28h16" stroke="#5888c0" strokeWidth="2" strokeDasharray="2 1" />
          <path d="M18 24h2v5h-2z" fill="#f0a040" />
        </svg>
      </button>
      <nav className="mt-px flex min-w-0 gap-[3px]">
        {taskGroups.map((group, gi) => (
          <div key={gi} className="flex gap-px">
            {group.map(([icon, label, active], i) => (
              <button
                key={i}
                className={`flex w-[79px] items-center gap-1.5 overflow-hidden rounded-xs border pl-1 text-xs whitespace-nowrap ${
                  active
                    ? "border-[#e0c8c0] bg-[linear-gradient(135deg,#e8d4ccdd_0%,#b0808099_50%,#a0909088_100%)]"
                    : "border-[#c8a8a088] bg-[linear-gradient(160deg,#d0b8b099_0%,#80606055_45%,#40202022_50%,#80707033_100%)]"
                }`}
              >
                <span className="flex w-8 shrink-0 justify-center">{taskIcons[icon]}</span>
                {label}
              </button>
            ))}
          </div>
        ))}
      </nav>
      <div className="ml-auto flex items-center gap-2 pt-0.5">
        <svg viewBox="0 0 8 4" className="mr-1 h-1 w-2"><path d="M0 4l4-4 4 4z" fill="#fff" /></svg>
        <svg viewBox="0 0 16 16" className="mr-1.5 size-4"><path d="M0 14L10 2v6L6 12z" fill="#f01818" /><path d="M9 6l7 8h-4l-4-4z" fill="#20d020" /></svg>
        <svg viewBox="0 0 16 16" className="size-4"><path d="M4 1h12l-1 4H8L6 8l-1 7-2-6H0l3-5z" fill="#2090e8" /><circle cx="10.500" cy="10.500" r="5" fill="#e02020" /><path d="M7.500 10.500h6" stroke="#fff" strokeWidth="2" /></svg>
        <svg viewBox="0 0 16 16" className="size-4"><path d="M14 1Q5 1 3 6q-4 8 4 9 7 0 6-8l-5 2q4 0 1 3-4 1-4-3 0-5 9-8z" fill="#d83018" /></svg>
        <svg viewBox="0 0 16 16" className="size-4"><path d="M1 0v16M2 2h8v7H2z" stroke="#fff" fill="#ffffffcc" strokeWidth="1.500" /><circle cx="11" cy="10.500" r="4.500" fill="#d82020" /><path d="M9 8.500l4 4M13 8.500l-4 4" stroke="#fff" strokeWidth="1.500" /></svg>
        <svg viewBox="0 0 16 16" className="size-4" fill="none" stroke="#fff"><rect x="5" y="3.500" width="10" height="8" strokeWidth="1.500" /><path d="M1 1v4h3V1M2.500 5v7H7M10 12v2M6 14.500h8" strokeWidth="1.500" /></svg>
        <svg viewBox="0 0 16 16" className="size-4" fill="none" stroke="#fff"><path d="M1 6h3l4-4v12l-4-4H1z" fill="#fff" /><path d="M10 5.500q2 2.500 0 5M12 4q3 4 0 8M14 2.500q4 5.500 0 11" /></svg>
        <time className="ml-1.5 w-[62px] text-center text-[13px] leading-[18px]">
          21:09
          <br />
          2017/8/4
        </time>
        <button aria-label="Show desktop" className="h-[38px] w-3 border border-r-0 border-[#b89898aa] bg-[linear-gradient(#c0a0a077,#80505044)]" />
      </div>
    </footer>
  );
}

export default function App() {
  return (
    <div className="flex h-screen w-full flex-col overflow-hidden bg-[#1c0a0c]">
      <div className="flex min-h-0 flex-1 flex-col bg-[linear-gradient(180deg,#c09cb4_0%,#a083a4_40%,#b8b0dc_75%,#a890c8_100%)]">
        <div className={`${UI} flex h-[22px] shrink-0 items-start justify-between overflow-hidden border-b border-[#d8c8d4] bg-[linear-gradient(90deg,#b996ac_0%,#d0a4c0_12%,#b0859c_22%,#c49cb4_29%,#5c1a26_31%,#6a2030_36%,#a06478_40%,#7a4052_46%,#935a6c_52%,#5e1a28_60%,#6e2030_68%,#4a0c16_76%,#7c1624_82%,#6a2a38_90%,#b088a0_96%,#a88098_100%)] pl-2 text-[13px] text-black`}>
          <div className="flex items-center gap-1 leading-[14px]">
            <AppIcon className="h-3.5 w-4" />
            <span>Graphic Editor 9.07b2 (00@HY-HYCAM-PC083 - Windows, pid:3128)</span>
          </div>
          <div className="flex h-3 w-[95px] rounded-bl-md border border-t-0 border-r-0 border-[#e0c8d4] bg-[#8a5a6a88]">
            <button aria-label="Minimize" className="flex w-7 items-start justify-center border-r border-[#e0c8d4]"><span className="mt-1 h-1 w-3 border border-[#555] bg-white" /></button>
            <button aria-label="Maximize" className="flex w-7 items-start justify-center border-r border-[#e0c8d4]"><span className="-mt-0.5 size-2.5 border-3 border-white shadow-[0_0_0_1px_#555]" /></button>
            <button aria-label="Close" className="flex flex-1 items-start justify-center"><svg viewBox="0 0 12 8" className="h-2 w-3"><path d="M2-2l8 9M10-2L2 7" stroke="#555" strokeWidth="4" /><path d="M2-2l8 9M10-2L2 7" stroke="#fff" strokeWidth="2" /></svg></button>
          </div>
        </div>
        <div className="ml-[7px] flex min-h-0 flex-1 flex-col border-l-2 border-[#404850] bg-black">
          <Header />
          <main className="flex min-h-0 flex-1">
            <Sidebar />
            <div className="relative min-w-0 flex-1 bg-black">
              <Drawing />
              <Popview />
            </div>
            <RightPanel />
          </main>
          <CommandLine />
          <StatusBar />
        </div>
        <div className="h-1.5 shrink-0 border-b border-[#e0d0f0]" />
      </div>
      <div className="h-px shrink-0 bg-[#1c0a0c]" />
      <Taskbar />
    </div>
  );
}
